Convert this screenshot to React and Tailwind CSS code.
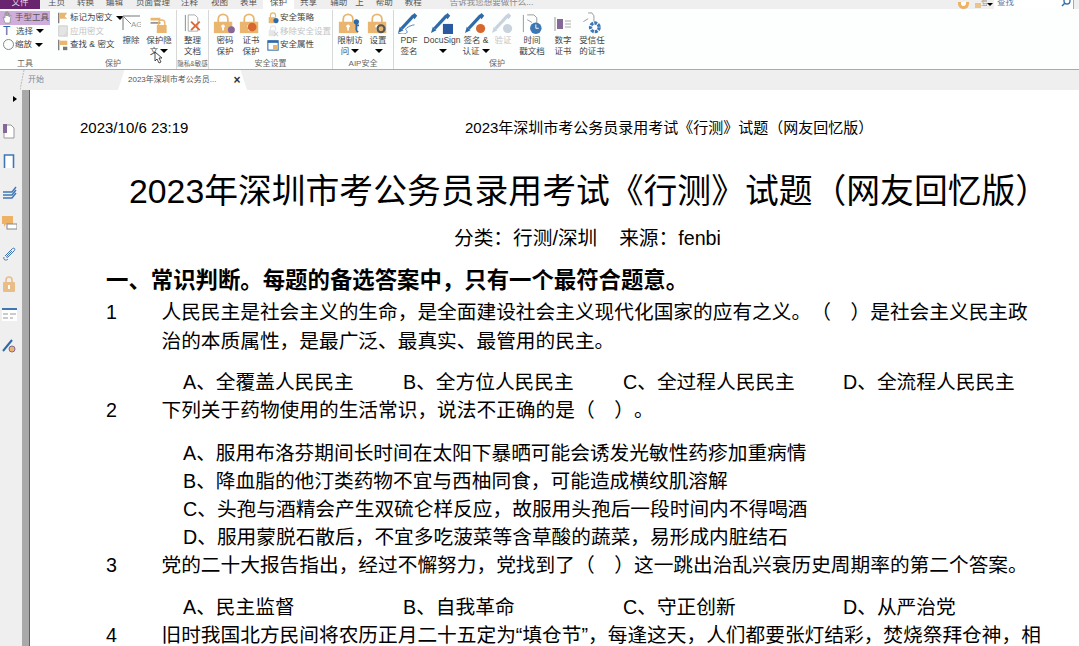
import React from "react";

const Lock = ({ children, color = "#e9b56f", w = 24 }) => (
  <svg width={w} height="21" viewBox={`0 0 ${(w * 24) / 21} 24`} className="shrink-0 mb-[1px]">
    <path d="M6 12V7a5.5 5.5 0 0 1 11 0v5" fill="none" stroke={color} strokeWidth="2" />
    <rect x="1" y="10" width="21" height="13" fill={color} />
    <circle cx="11.5" cy="15" r="2" fill="#fff" />
    <rect x="10.5" y="16" width="2" height="4" fill="#fff" />
    {children}
  </svg>
);

const Pen = ({ color = "#2f6aa8", children }) => (
  <svg width="28" height="22" viewBox="0 0 30 24" className="shrink-0 mb-[1px]">
    <path d="M7 18L20 4" stroke={color} strokeWidth="3.5" />
    <path d="M18 4l3-3 3 3-3 4z" fill={color} />
    <path d="M3 23l2-7 4 4z" fill={color} />
    {children}
  </svg>
);

const SmallIcon = ({ type }) => {
  if (type === "flag") {
    return (
      <svg width="12" height="12" viewBox="0 0 14 14" className="shrink-0">
        <path d="M2 1v12" stroke="#777" strokeWidth="1.5" />
        <path d="M3 1h9L9 5l3 3H3z" fill="#e9b56f" />
      </svg>
    );
  }
  if (type === "page") {
    return (
      <svg width="12" height="12" viewBox="0 0 14 14" className="shrink-0">
        <rect x="2" y="1" width="10" height="12" fill="#e4e4e4" stroke="#ccc" />
        <path d="M7 13l4-5 2 2-4 4z" fill="#d9d9d9" />
      </svg>
    );
  }
  if (type === "find") {
    return (
      <svg width="12" height="12" viewBox="0 0 14 14" className="shrink-0">
        <path d="M2 1v12" stroke="#777" strokeWidth="1.5" />
        <rect x="3" y="2" width="9" height="5" fill="#e9b56f" />
        <rect x="7" y="9" width="5" height="4" fill="#777" />
      </svg>
    );
  }
  if (type === "policy") {
    return (
      <svg width="12" height="12" viewBox="0 0 14 14" className="shrink-0">
        <path d="M4 6V4a3 3 0 0 1 6 0v2" fill="none" stroke="#e9b56f" strokeWidth="1.4" />
        <rect x="2" y="6" width="8" height="7" fill="#e9b56f" />
        <circle cx="10.5" cy="10" r="3" fill="#2f6aa8" />
      </svg>
    );
  }
  if (type === "remove") {
    return (
      <svg width="12" height="12" viewBox="0 0 14 14" className="shrink-0">
        <path d="M4 6V4a3 3 0 0 1 6 0v2" fill="none" stroke="#e6e6e6" strokeWidth="1.4" />
        <rect x="2" y="6" width="8" height="7" fill="#e6e6e6" />
        <path d="M8 8l5 5m0-5l-5 5" stroke="#d0d0d0" strokeWidth="1.2" />
      </svg>
    );
  }
  return (
    <svg width="12" height="12" viewBox="0 0 14 14" className="shrink-0">
      <rect x="1" y="2" width="12" height="11" fill="#fff" stroke="#2f6aa8" strokeWidth="1.2" />
      <rect x="1" y="2" width="12" height="2.5" fill="#2f6aa8" />
      <rect x="7" y="7" width="5" height="5" fill="#e9b56f" />
    </svg>
  );
};

const Arrow = () => <span className="inline-block w-0 h-0 border-x-[4px] border-x-transparent border-t-[4px] border-t-black ml-[2px] align-middle shrink-0" />;

const RowBtn = ({ icon, label, dim, arrow }) => (
  <div className={`h-[13.5px] flex items-center gap-[1px] whitespace-nowrap ${dim ? "text-[#c4c4c4]" : "text-[#444]"}`}>
    {icon}
    <span>{label}</span>
    {arrow && <Arrow />}
  </div>
);

const BigBtn = ({ w, icon, lines, arrow, dim }) => (
  <div className={`flex flex-col items-center shrink-0 ${w} ${dim ? "text-[#c4c4c4]" : "text-[#444]"}`}>
    <div className="h-[25px] flex items-end justify-center">{icon}</div>
    <div className="leading-[10.5px] text-center whitespace-nowrap">
      <div className="h-[10.5px]">{lines[0]}</div>
      <div className="h-[10.5px]">
        {lines[1]}
        {arrow && <Arrow />}
      </div>
    </div>
  </div>
);

const Group = ({ w, label, children, sep = true }) => (
  <div className={`shrink-0 ${w} h-[59px] flex flex-col ${sep ? "border-r border-[#d8d8d8]" : ""}`}>
    <div className="flex h-[49px]">{children}</div>
    <div className="text-center text-[8px] leading-[10px] text-[#666] whitespace-nowrap">{label}</div>
  </div>
);

const topTabs = [
  ["主页", "ml-[8px]"],
  ["转换", "ml-[12px]"],
  ["编辑", "ml-[12px]"],
  ["页面管理", "ml-[13px]"],
  ["注释", "ml-[11px]"],
  ["视图", "ml-[13px]"],
  ["表单", "ml-[12px]"],
];

const sideIcons = [
  <svg width="12" height="15" viewBox="0 0 12 15" key="a">
    <path d="M1 1h7l3 3v10H1z" fill="#fff" stroke="#999" />
    <rect x="0" y="0" width="4" height="9" fill="#86679a" />
  </svg>,
  <svg width="12" height="15" viewBox="0 0 12 15" key="b">
    <path d="M1.5 14V1h9v13" fill="#fff" stroke="#3f77b5" strokeWidth="1.6" />
  </svg>,
  <svg width="15" height="14" viewBox="0 0 15 14" key="c">
    <path d="M1 7h9l4-5M1 10h9l4-5M1 13h9l4-5" fill="none" stroke="#3f77b5" strokeWidth="1.4" />
  </svg>,
  <svg width="15" height="15" viewBox="0 0 15 15" key="d">
    <path d="M0 0h11v8H4l-2 3V8H0z" fill="#edb263" />
    <rect x="5" y="8" width="10" height="5" fill="#fff" stroke="#888" />
  </svg>,
  <svg width="13" height="15" viewBox="0 0 13 15" key="e">
    <path d="M2 10l7-7c2-2 4 0 2 2L5 11c-1 1-2 0-1-1l5-5M1 11c-1 3 2 4 4 2" fill="none" stroke="#3f77b5" strokeWidth="1" />
  </svg>,
  <svg width="12" height="16" viewBox="0 0 12 16" key="f">
    <path d="M3 7V4a3 3 0 0 1 6 0v3" fill="none" stroke="#e9bd85" strokeWidth="1.6" />
    <rect x="0" y="6" width="12" height="10" rx="1" fill="#e9bd85" />
    <rect x="5" y="9" width="2" height="4" fill="#fff" />
  </svg>,
  <svg width="15" height="13" viewBox="0 0 15 13" key="g">
    <rect x="0" y="0" width="15" height="13" fill="#fff" />
    <rect x="0" y="0" width="15" height="2" fill="#3f77b5" />
    <path d="M1 6h5M8 6h6M1 10h5M8 10h3" stroke="#999" />
  </svg>,
  <svg width="15" height="15" viewBox="0 0 15 15" key="h">
    <path d="M1 13L10 2" stroke="#2f6aa8" strokeWidth="2" />
    <circle cx="10" cy="11" r="3" fill="#e9b56f" stroke="#86679a" />
  </svg>,
];

const Option = ({ children }) => <div className="h-[28px] pl-[153px] whitespace-nowrap">{children}</div>;

const Options = ({ items, className }) => (
  <div className={`flex h-[28px] pl-[153px] ${className}`}>
    {items.map((t) => (
      <div key={t} className="w-[220px] shrink-0 whitespace-nowrap">{t}</div>
    ))}
  </div>
);

const Question = ({ n, children }) => (
  <div className="flex pl-[76px]">
    <div className="w-[55.5px] shrink-0">{n}</div>
    <div className="whitespace-pre">{children}</div>
  </div>
);

export default function App() {
  return (
    <div className="relative w-[1079px] h-[646px] overflow-hidden bg-white flex flex-col [text-spacing-trim:space-all] font-['Liberation_Sans','Noto_Sans_CJK_SC',sans-serif]">
      {/* top tabs, cut off by the window edge */}
      <div className="h-[9px] shrink-0 bg-[#efefef] flex items-end overflow-hidden text-[8.5px] leading-[14px] text-[#555] whitespace-nowrap">
        <div className="w-[40px] h-[9px] bg-[#68246f] text-[#e6d6e8] flex items-end justify-center overflow-hidden">文件</div>
        {topTabs.map(([t, m]) => (
          <div key={t} className={m}>{t}</div>
        ))}
        <div className="ml-[6px] w-[31px] h-[9px] bg-white text-center overflow-hidden flex items-end justify-center">保护</div>
        <div className="ml-[6px]">共享</div>
        <div className="ml-[13px]">辅助</div>
        <div className="ml-[8px]">上</div>
        <div className="ml-[12px]">帮助</div>
        <div className="ml-[12px]">教程</div>
        <div className="ml-[28px] text-[#888]">告诉我您想要做什么...</div>
        <div className="ml-auto flex items-end">
          <div className="w-[11px] h-[7px] rounded-b-full border-[3px] border-t-0 border-[#edb263] bg-white" />
          <div className="ml-[6px] w-[6px] h-[5px] mb-[1px] bg-[#e9c48f]" />
          <div className="w-[6px] overflow-hidden text-[#999]">登</div>
          <div className="w-0 h-0 mb-[3px] border-x-[3px] border-x-transparent border-t-[3px] border-t-black" />
          <div className="ml-[1px] w-[80px] h-[9px] bg-white border-r border-[#aaa] flex items-end justify-between overflow-hidden text-[#5a82b4] pl-[3px]">
            <span>查找</span>
            <svg width="10" height="9" viewBox="0 0 10 9" className="mr-[2px]">
              <circle cx="6" cy="1" r="3" fill="none" stroke="#2f6aa8" strokeWidth="1.3" />
              <path d="M3.5 3.5L1 6" stroke="#2f6aa8" strokeWidth="1.5" />
            </svg>
          </div>
          <div className="w-[5px]" />
        </div>
      </div>

      {/* ribbon */}
      <div className="h-[61px] shrink-0 pt-[1px] bg-[#fdfffe] border-b border-[#aaa] flex text-[8.5px] leading-[13.5px]">
        <Group
          w="w-[177px]"
          label={
            <div className="flex">
              <div className="w-[50px]">工具</div>
              <div className="w-[126px]">保护</div>
            </div>
          }
        >
          <div className="w-[50px] shrink-0 pt-[1px]">
            <div className="h-[13.5px] bg-[#cfaedc] flex items-center gap-[1px] text-[#555] whitespace-nowrap">
              <svg width="12" height="13" viewBox="0 0 12 13" className="ml-[2px] shrink-0">
                <path d="M3 12L1 6l2 1V2h1v3V1h1v4V1h1v4l1-3v4l2-2-1 8z" fill="#fff" stroke="#888" strokeWidth=".7" />
              </svg>
              手型工具
            </div>
            <div className="pl-[3px]">
              <RowBtn icon={<span className="text-[#2f6aa8] text-[12px] leading-none w-[12px]">T</span>} label="选择" arrow />
              <RowBtn icon={<span className="w-[11px] h-[11px] rounded-full border border-[#888] inline-block shrink-0" />} label="缩放" arrow />
            </div>
          </div>
          <div className="w-[66px] shrink-0 pl-[7px] pt-[1px]">
            <RowBtn icon={<SmallIcon type="flag" />} label="标记为密文" arrow />
            <RowBtn icon={<SmallIcon type="page" />} label="应用密文" dim />
            <RowBtn icon={<SmallIcon type="find" />} label="查找 & 密文" />
          </div>
          <BigBtn
            w="w-[30px]"
            lines={["擦除", ""]}
            icon={
              <svg width="19" height="16" viewBox="0 0 19 16" className="mb-[4px] shrink-0">
                <path d="M1 15V1h17" fill="none" stroke="#777" />
                <path d="M1 1l8 8" stroke="#c9763f" />
                <text x="9" y="12" fontSize="8" fill="#999">AG</text>
              </svg>
            }
          />
          <BigBtn
            w="w-[26px]"
            lines={["保护隐", "文"]}
            arrow
            icon={
              <svg width="19" height="17" viewBox="0 0 20 19" className="mb-[2px] shrink-0">
                <rect x="0" y="2" width="11" height="3" fill="#e9b56f" />
                <rect x="0" y="7" width="11" height="1.5" fill="#777" />
                <path d="M9 11V8a3.5 3.5 0 0 1 7 0v3" fill="none" stroke="#e9b56f" strokeWidth="1.5" />
                <rect x="7" y="10" width="11" height="9" fill="#e9b56f" />
              </svg>
            }
          />
        </Group>
        <Group w="w-[32px]" label={<span className="text-[6.5px]">隐私&敏感</span>}>
          <BigBtn
            w="w-[31px]"
            lines={["整理", "文档"]}
            icon={
              <svg width="20" height="21" viewBox="0 0 20 22" className="mb-[1px] shrink-0">
                <path d="M2 2v17" stroke="#888" />
                <path d="M5 2h7l3 3v14H5z" fill="#fff" stroke="#aaa" />
                <path d="M8 9l9 9m0-9l-9 9" stroke="#d86a3c" strokeWidth="2" />
              </svg>
            }
          />
        </Group>
        <Group w="w-[124px]" label="安全设置">
          <BigBtn w="w-[28px] ml-[2px]" lines={["密码", "保护"]} icon={<Lock><circle cx="21" cy="19" r="4" fill="#86679a" /></Lock>} />
          <BigBtn w="w-[24px]" lines={["证书", "保护"]} icon={<Lock><circle cx="15" cy="16" r="5" fill="#d8672f" /></Lock>} />
          <div className="pl-[4px] pt-[1px]">
            <RowBtn icon={<SmallIcon type="policy" />} label="安全策略" />
            <RowBtn icon={<SmallIcon type="remove" />} label="移除安全设置" dim />
            <RowBtn icon={<SmallIcon type="prop" />} label="安全属性" />
          </div>
        </Group>
        <Group w="w-[61px]" label="AIP安全">
          <BigBtn
            w="w-[34px]"
            lines={["限制访", "问"]}
            arrow
            icon={<Lock><path d="M21 8v12m0 0l2 2M21 14h3" stroke="#2f6aa8" strokeWidth="2" /><circle cx="21" cy="10" r="3" fill="#2f6aa8" /></Lock>}
          />
          <BigBtn
            w="w-[22px]"
            lines={["设置", ""]}
            arrow
            icon={<Lock w={22}><circle cx="16" cy="18" r="4" fill="none" stroke="#555" strokeWidth="2.5" /></Lock>}
          />
        </Group>
        <Group w="w-[214px]" label={<div className="pr-[8px]">保护</div>} sep={false}>
          <BigBtn w="w-[30px]" lines={["PDF", "签名"]} icon={<Pen><path d="M3 23c8 3 12-1 9-3s6-6 9-6" fill="none" stroke="#4a7fb8" strokeWidth="1" /></Pen>} />
          <BigBtn w="w-[36px]" lines={["DocuSign", ""]} arrow icon={<Pen><rect x="16" y="13" width="11" height="11" fill="#2a5aa0" /></Pen>} />
          <BigBtn w="w-[32px]" lines={["签名 &", "认证"]} arrow icon={<Pen><circle cx="20" cy="18" r="5" fill="#d8672f" /></Pen>} />
          <BigBtn w="w-[22px]" dim lines={["验证", ""]} icon={<Pen color="#c9d3de"><circle cx="20" cy="18" r="5" fill="#c9d3de" /></Pen>} />
          <BigBtn
            w="w-[36px]"
            lines={["时间", "戳文档"]}
            icon={
              <svg width="22" height="23" viewBox="0 0 22 24" className="shrink-0">
                <path d="M2 3v18" stroke="#999" />
                <path d="M6 3h7l3 3v6M6 8l5 3" fill="none" stroke="#999" />
                <circle cx="15" cy="17" r="6" fill="#3f77b5" />
                <path d="M15 13v4h3" stroke="#fff" fill="none" />
              </svg>
            }
          />
          <BigBtn
            w="w-[26px]"
            lines={["数字", "证书"]}
            icon={
              <svg width="18" height="16" viewBox="0 0 18 16" className="mb-[3px] shrink-0">
                <path d="M1 1v14" stroke="#999" />
                <rect x="3" y="3" width="6" height="10" fill="#86679a" />
                <path d="M11 5h6M11 8h6M11 11h6" stroke="#aaa" />
              </svg>
            }
          />
          <BigBtn
            w="w-[32px]"
            lines={["受信任", "的证书"]}
            icon={
              <svg width="20" height="23" viewBox="0 0 20 24" className="shrink-0">
                <path d="M6 1h4l2 3v6M1 10l5-3" fill="none" stroke="#999" />
                <circle cx="13" cy="16" r="4.5" fill="none" stroke="#3f77b5" strokeWidth="3.5" strokeDasharray="3 1" />
              </svg>
            }
          />
        </Group>
      </div>

      {/* document tabs */}
      <div className="h-[20px] shrink-0 bg-[#efefef] flex text-[8px] leading-[20px] whitespace-nowrap">
        <div className="w-[20px]" />
        <svg width="5" height="20" viewBox="0 0 5 20" className="shrink-0">
          <path d="M4 0L0 20" stroke="#bbb" strokeDasharray="2 1" />
        </svg>
        <div className="w-[93px] pl-[3px] text-[#7a8ba0]">开始</div>
        <div className="w-[129px] h-[20px] bg-white [clip-path:polygon(5%_0,95%_0,100%_100%,0_100%)] pl-[10px] flex items-center text-[#555]">
          <span>2023年深圳市考公务员...</span>
          <span className="ml-[17px] text-[12px] font-bold text-[#333]">×</span>
        </div>
      </div>

      <div className="flex-1 flex min-h-0">
        {/* left panel */}
        <div className="w-[22px] shrink-0 bg-[#efefef] flex flex-col items-center">
          <span className="mt-[6px] ml-[8px] w-0 h-0 border-y-[3px] border-y-transparent border-l-[4px] border-l-black" />
          <div className="mt-[14px] flex flex-col items-center pr-[4px]">
            {sideIcons.map((icon) => (
              <div key={icon.key} className="h-[30.6px] flex items-center">{icon}</div>
            ))}
          </div>
        </div>
        <div className="w-[7px] shrink-0 bg-[#a9a9a9]" />
        <div className="w-[1px] shrink-0 bg-[#606060]" />

        {/* page */}
        <div className="flex-1 min-w-0 text-black text-[19.7px] leading-[28px] overflow-hidden">
          <div className="h-[30px]" />
          <div className="flex h-[16px] text-[15px] leading-[16px] pl-[50px] whitespace-nowrap">
            <div className="w-[385px]">2023/10/6 23:19</div>
            <div>2023年深圳市考公务员录用考试《行测》试题（网友回忆版）</div>
          </div>
          <div className="mt-[34px] h-[42px] pl-[99px] text-[33.8px] leading-[42px] whitespace-nowrap">
            2023年深圳市考公务员录用考试《行测》试题（网友回忆版）
          </div>
          <div className="mt-[12px] h-[28px] pl-[424px] whitespace-pre">分类：行测/深圳    来源：fenbi</div>
          <div className="mt-[15px] h-[28px] pl-[76px] text-[22.4px] font-bold whitespace-nowrap">
            一、常识判断。每题的备选答案中，只有一个最符合题意。
          </div>
          <div className="h-[3px]" />
          <Question n="1">
            <div className="h-[29px]">人民民主是社会主义的生命，是全面建设社会主义现代化国家的应有之义。（　）是社会主义民主政</div>
            <div>治的本质属性，是最广泛、最真实、最管用的民主。</div>
          </Question>
          <Options className="mt-[13px]" items={["A、全覆盖人民民主", "B、全方位人民民主", "C、全过程人民民主", "D、全流程人民民主"]} />
          <Question n="2">下列关于药物使用的生活常识，说法不正确的是（　）。</Question>
          <div className="mt-[15px]">
            <Option>A、服用布洛芬期间长时间在太阳下暴晒可能会诱发光敏性药疹加重病情</Option>
            <Option>B、降血脂的他汀类药物不宜与西柚同食，可能造成横纹肌溶解</Option>
            <Option>C、头孢与酒精会产生双硫仑样反应，故服用头孢后一段时间内不得喝酒</Option>
            <Option>D、服用蒙脱石散后，不宜多吃菠菜等含草酸的蔬菜，易形成内脏结石</Option>
          </div>
          <Question n="3">党的二十大报告指出，经过不懈努力，党找到了（　）这一跳出治乱兴衰历史周期率的第二个答案。</Question>
          <Options className="mt-[14px]" items={["A、民主监督", "B、自我革命", "C、守正创新", "D、从严治党"]} />
          <Question n="4">旧时我国北方民间将农历正月二十五定为“填仓节”，每逢这天，人们都要张灯结彩，焚烧祭拜仓神，相</Question>
        </div>
      </div>

      {/* mouse pointer over the ribbon */}
      <svg width="10" height="13" viewBox="0 0 10 13" className="absolute left-[154px] top-[51px]">
        <path d="M1 1v9l2-2 2 4 2-1-2-4h3z" fill="#fff" stroke="#222" strokeWidth=".8" />
      </svg>
    </div>
  );
}
